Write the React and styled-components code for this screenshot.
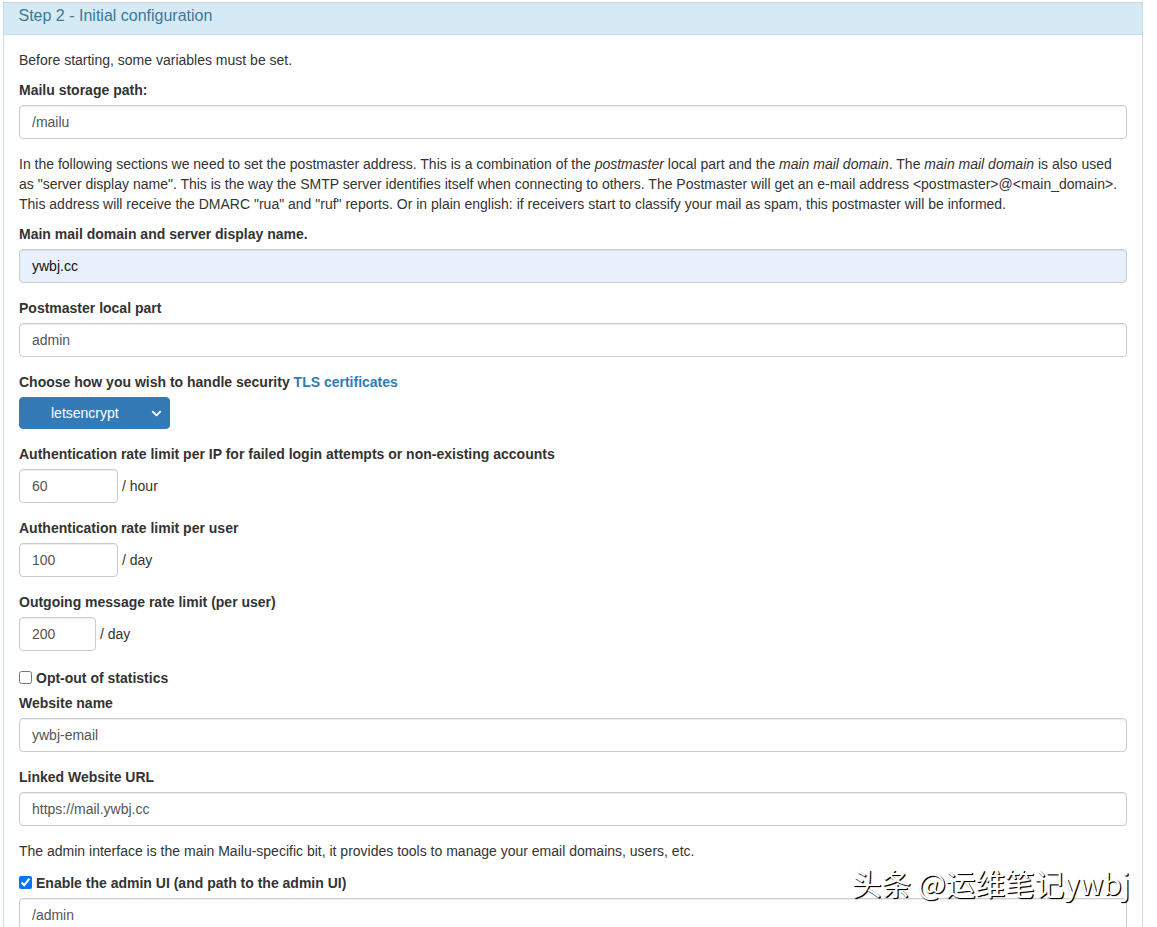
import React from "react";
import styled, { createGlobalStyle } from "styled-components";
import { ChevronDown } from "lucide-react";

const GlobalStyle = createGlobalStyle`
  * {
    box-sizing: border-box;
  }
  html,
  body {
    margin: 0;
    height: 927px;
    overflow: hidden;
    background: #fff;
  }
  body {
    font-family: "Liberation Sans", Arial, sans-serif;
    font-size: 14px;
    line-height: 20px;
    color: #333;
  }
`;

export default function App() {
  return (
    <Page>
      <GlobalStyle />
      <Panel>
        <PanelHeading>Step 2 - Initial configuration</PanelHeading>
        <PanelBody>
          <Paragraph>Before starting, some variables must be set.</Paragraph>

          <FormGroup>
            <Label>Mailu storage path:</Label>
            <TextInput defaultValue="/mailu" />
          </FormGroup>

          <Paragraph>
            In the following sections we need to set the postmaster address.
            This is a combination of the <em>postmaster</em> local part and the{" "}
            <em>main mail domain</em>. The <em>main mail domain</em> is also
            used as "server display name". This is the way the SMTP server
            identifies itself when connecting to others. The Postmaster will
            get an e-mail address {"<postmaster>@<main_domain>"}. This address
            will receive the DMARC "rua" and "ruf" reports. Or in plain
            english: if receivers start to classify your mail as spam, this
            postmaster will be informed.
          </Paragraph>

          <FormGroup>
            <Label>Main mail domain and server display name.</Label>
            <TextInput defaultValue="ywbj.cc" $autofill />
          </FormGroup>

          <FormGroup>
            <Label>Postmaster local part</Label>
            <TextInput defaultValue="admin" />
          </FormGroup>

          <FormGroup>
            <Label>
              Choose how you wish to handle security{" "}
              <LabelLink href="#tls">TLS certificates</LabelLink>
            </Label>
            <SelectWrap>
              <SecuritySelect defaultValue="letsencrypt">
                <option value="letsencrypt">letsencrypt</option>
                <option value="cert">cert</option>
                <option value="notls">notls</option>
              </SecuritySelect>
              <SelectArrow size={15} strokeWidth={3} />
            </SelectWrap>
          </FormGroup>

          <FormGroup>
            <Label>
              Authentication rate limit per IP for failed login attempts or
              non-existing accounts
            </Label>
            <RateRow>
              <RateInput defaultValue="60" />
              <span>/ hour</span>
            </RateRow>
          </FormGroup>

          <FormGroup>
            <Label>Authentication rate limit per user</Label>
            <RateRow>
              <RateInput defaultValue="100" />
              <span>/ day</span>
            </RateRow>
          </FormGroup>

          <FormGroup>
            <Label>Outgoing message rate limit (per user)</Label>
            <RateRow>
              <RateInput defaultValue="200" $narrow />
              <span>/ day</span>
            </RateRow>
          </FormGroup>

          <CheckGroup>
            <CheckLabel>
              <Checkbox type="checkbox" />
              Opt-out of statistics
            </CheckLabel>
          </CheckGroup>

          <FormGroup>
            <Label>Website name</Label>
            <TextInput defaultValue="ywbj-email" />
          </FormGroup>

          <FormGroup>
            <Label>Linked Website URL</Label>
            <TextInput defaultValue="https://mail.ywbj.cc" />
          </FormGroup>

          <Paragraph>
            The admin interface is the main Mailu-specific bit, it provides
            tools to manage your email domains, users, etc.
          </Paragraph>

          <AdminGroup>
            <CheckLabel>
              <Checkbox type="checkbox" defaultChecked />
              Enable the admin UI (and path to the admin UI)
            </CheckLabel>
            <TextInput defaultValue="/admin" />
          </AdminGroup>
        </PanelBody>
      </Panel>
      <Watermark>头条 @运维笔记ywbj</Watermark>
    </Page>
  );
}

const Page = styled.div`
  position: relative;
  height: 927px;
  overflow: hidden;
  padding: 2px 14px 0 3px;
`;

const Panel = styled.div`
  border: 1px solid #c6dce8;
  border-top-color: #cfd4d6;
  border-bottom: 0;
`;

const PanelHeading = styled.div`
  height: 32px;
  padding: 3px 15px 0 14.5px;
  font-size: 16px;
  line-height: 20px;
  color: #3d7896;
  background: #d6eaf5;
  border-bottom: 1px solid #bfe0ee;
`;

const PanelBody = styled.div`
  padding: 15px;
`;

const Paragraph = styled.p`
  margin: 0 0 10px;
`;

const FormGroup = styled.div`
  margin-bottom: 15px;
`;

const CheckGroup = styled.div`
  margin: 17px 0 5px;
`;

const AdminGroup = styled.div`
  margin-top: 12px;
`;

const Label = styled.label`
  display: block;
  margin-bottom: 5px;
  font-weight: 700;
`;

const LabelLink = styled.a`
  color: #337ab7;
  text-decoration: none;
`;

const CheckLabel = styled.label`
  display: flex;
  align-items: center;
  height: 20px;
  margin-bottom: 5px;
  font-weight: 700;
`;

const Checkbox = styled.input`
  width: 13px;
  height: 13px;
  margin: 0 4px 2px 0;
`;

const TextInput = styled.input`
  display: block;
  width: 100%;
  height: 34px;
  padding: 6px 12px;
  font: inherit;
  color: ${(props) => (props.$autofill ? "#111" : "#555")};
  background: ${(props) => (props.$autofill ? "#e8f0fe" : "#fff")};
  border: 1px solid #ccc;
  border-radius: 4px;
  box-shadow: inset 0 1px 1px rgba(0, 0, 0, 0.075);
  outline: none;
`;

const RateRow = styled.div`
  display: flex;
  align-items: center;
  gap: 4px;
`;

const RateInput = styled(TextInput)`
  width: ${(props) => (props.$narrow ? "77px" : "99px")};
`;

const SelectWrap = styled.div`
  position: relative;
  width: 151px;
  height: 32px;
`;

const SecuritySelect = styled.select`
  display: block;
  width: 100%;
  height: 100%;
  padding: 0 0 0 31px;
  font: inherit;
  color: #fff;
  background: #337ab7;
  border: 1px solid #337ab7;
  border-radius: 4px;
  appearance: none;
  outline: none;
`;

const SelectArrow = styled(ChevronDown)`
  position: absolute;
  top: 9px;
  right: 6px;
  color: #fff;
  pointer-events: none;
`;

const Watermark = styled.div`
  position: absolute;
  left: 852px;
  top: 864px;
  font-family: "Noto Sans CJK SC", sans-serif;
  font-size: 29.6px;
  line-height: 38px;
  white-space: nowrap;
  color: #fff;
  text-shadow: 1px 1px 1px #000, 1px 1px 0 #222;
  pointer-events: none;
`;
